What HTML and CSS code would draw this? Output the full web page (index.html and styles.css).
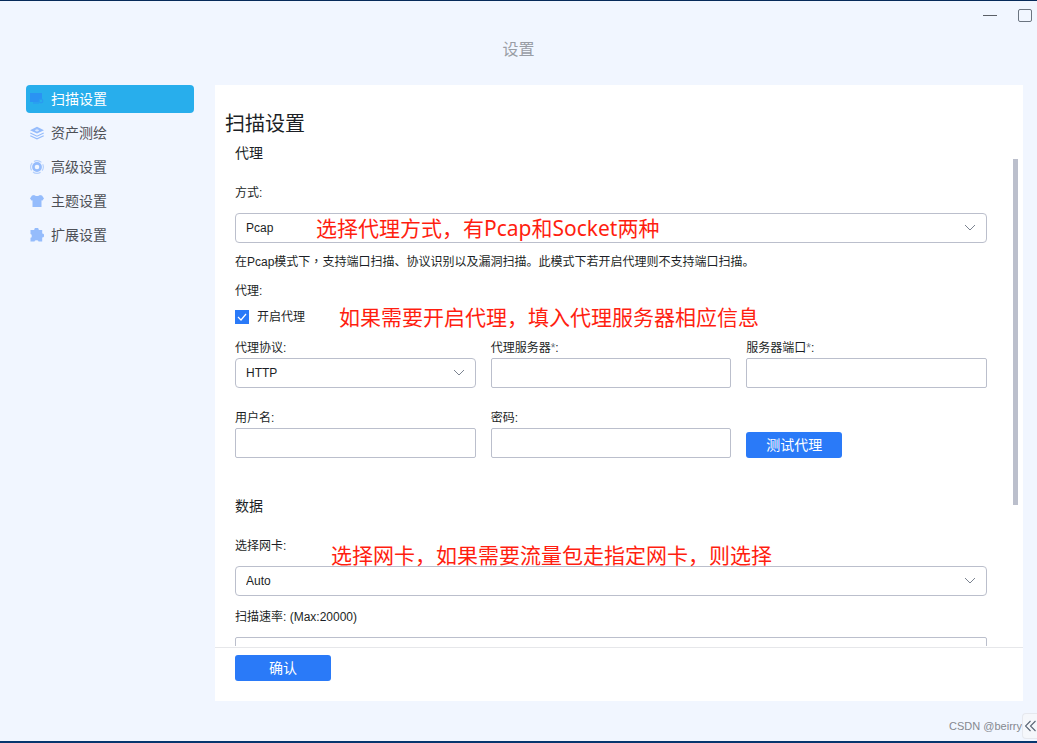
FILE: index.html
```html
<!DOCTYPE html>
<html lang="zh-CN">
<head>
<meta charset="utf-8">
<title>设置</title>
<link rel="stylesheet" href="styles.css">
</head>
<body>
<div class="window">
  <header class="titlebar">
    <h1 class="title">设置</h1>
    <div class="controls">
      <button class="control" type="button" aria-label="最小化"><svg width="16" height="16" viewBox="0 0 16 16"><path d="M1 8.500h14" stroke="#5b5f66" fill="none"/></svg></button>
      <button class="control" type="button" aria-label="最大化"><svg width="16" height="16" viewBox="0 0 16 16"><rect x="1.500" y="2.500" width="13" height="12" rx="1.500" stroke="#6b7480" fill="none"/></svg></button>
    </div>
  </header>

  <div class="body">
    <nav class="nav">
      <a class="nav-item active" href="#scan">
        <svg class="nav-icon" viewBox="0 0 14 14"><path d="M0 1h12v6l-2 .5-1.500 2.500H0z" fill="#2a93f3"/><path d="M3 11h6" stroke="#2a93f3"/><circle cx="11" cy="9" r="1.800" fill="none" stroke="#2a9cf0" stroke-width="1.300"/></svg>
        扫描设置</a>
      <a class="nav-item" href="#asset">
        <svg class="nav-icon" viewBox="0 0 14 14"><path d="M7 .8l7 3.400-7 3.400-7-3.400z" fill="#95bcfc"/><path d="M5 4.300h4M7 2.800v3" stroke="#f1f6ff" stroke-width=".8"/><path d="M.3 7L7 10.200 13.700 7M.3 9.700L7 12.900l6.700-3.200" fill="none" stroke="#95bcfc" stroke-width="1.200"/></svg>
        资产测绘</a>
      <a class="nav-item" href="#advanced">
        <svg class="nav-icon" viewBox="0 0 14 14"><circle cx="7" cy="7" r="6.400" fill="none" stroke="#b3cffc" stroke-width="1.100" stroke-dasharray="8 2.050" stroke-dashoffset="4"/><circle cx="7" cy="7" r="3.600" fill="none" stroke="#95bcfc" stroke-width="2.600"/></svg>
        高级设置</a>
      <a class="nav-item" href="#theme">
        <svg class="nav-icon" viewBox="0 0 14 14"><path d="M4.300 1c.7 1.300 4.700 1.300 5.400 0l2.300.4L14 4.500l-1.800 2.200-.7-.4V13h-9V6.300l-.7.4L0 4.500l2-3.100z" fill="#95bcfc"/></svg>
        主题设置</a>
      <a class="nav-item" href="#extension">
        <svg class="nav-icon" viewBox="0 0 14 14"><path d="M.5 2h3.700a2.200 2.200 0 0 1 4.600 0h3.400v3.500a2 2 0 0 1 0 4v4H8.500a2 1.300 0 0 0-4 0h-4V9.800a1.300 1.900 0 0 0 0-3.800z" fill="#95bcfc"/></svg>
        扩展设置</a>
    </nav>

    <main class="panel">
      <h2 class="panel-title">扫描设置</h2>
      <div class="scroll-area">
        <form class="form" id="settings">
          <h3 class="section-title">代理</h3>
          <div class="field">
            <label class="label" for="mode">方式:</label>
            <div class="select-box">
              <select class="input select" id="mode"><option>Pcap</option><option>Socket</option></select>
              <svg class="chevron" viewBox="0 0 12 8"><path d="M1 1l5 5 5-5" fill="none" stroke="#7b8390"/></svg>
              <p class="note note-mode">选择代理方式，有Pcap和Socket两种</p>
            </div>
          </div>
          <p class="help">在Pcap模式下<span class="mid-comma" lang="zh-TW">，</span>支持端口扫描、协议识别以及漏洞扫描。此模式下若开启代理则不支持端口扫描。</p>
          <div class="proxy">
            <p class="label">代理:</p>
            <div class="check-row">
              <span class="check-box">
                <input class="check" type="checkbox" id="enable" checked>
                <svg class="tick" viewBox="0 0 14 14"><path d="M3 7l3 3 5-6" fill="none" stroke="#fff" stroke-width="1.200"/></svg>
              </span>
              <label class="label" for="enable">开启代理</label>
              <p class="note note-proxy">如果需要开启代理，填入代理服务器相应信息</p>
            </div>
          </div>
          <div class="grid">
            <div class="cell">
              <label class="label" for="protocol">代理协议:</label>
              <div class="select-box">
                <select class="input select" id="protocol"><option>HTTP</option></select>
                <svg class="chevron" viewBox="0 0 12 8"><path d="M1 1l5 5 5-5" fill="none" stroke="#7b8390"/></svg>
              </div>
            </div>
            <div class="cell"><label class="label" for="server">代理服务器<span class="star">*</span>:</label><input class="input" id="server" type="text"></div>
            <div class="cell"><label class="label" for="port">服务器端口<span class="star">*</span>:</label><input class="input" id="port" type="text"></div>
            <div class="cell"><label class="label" for="user">用户名:</label><input class="input" id="user" type="text"></div>
            <div class="cell"><label class="label" for="password">密码:</label><input class="input" id="password" type="password"></div>
            <div class="cell cell-action"><button class="button" type="button">测试代理</button></div>
          </div>
          <h3 class="section-title section-data">数据</h3>
          <div class="field">
            <label class="label" for="nic">选择网卡:</label>
            <div class="select-box">
              <select class="input select" id="nic"><option>Auto</option></select>
              <svg class="chevron" viewBox="0 0 12 8"><path d="M1 1l5 5 5-5" fill="none" stroke="#7b8390"/></svg>
              <p class="note note-nic">选择网卡，如果需要流量包走指定网卡，则选择</p>
            </div>
          </div>
          <div class="field field-rate">
            <label class="label" for="rate">扫描速率: (Max:20000)</label>
            <input class="input" id="rate" type="text">
          </div>
        </form>
        <div class="rail"><div class="thumb"></div></div>
      </div>
      <div class="actions"><button class="button" type="submit" form="settings">确认</button></div>
    </main>
  </div>

  <footer class="bottom">
    <span class="credit">CSDN @beirry</span>
    <button class="collapse" type="button" aria-label="收起"><svg width="11" height="12" viewBox="0 0 11 12"><path d="M5.500 1l-5 5 5 5M10.500 1l-5 5 5 5" fill="none" stroke="#596474" stroke-width="1.100"/></svg></button>
  </footer>
</div>
</body>
</html>
```
FILE: styles.css
```css
* {
  box-sizing: border-box;
  margin: 0;
  padding: 0;
}

body {
  color: #1c1f26;
  font: 12px/16px "Liberation Sans", "Noto Sans CJK SC", sans-serif;
}

button,
input,
select {
  color: inherit;
  font: inherit;
}

.window {
  display: flex;
  flex-direction: column;
  height: 100vh;
  background: #f1f6ff;
  border-top: 1px solid #062a5a;
  border-bottom: 2px solid #06366e;
  overflow: hidden;
}

.titlebar {
  display: grid;
  grid-template-columns: 1fr auto 1fr;
  height: 84px;
  flex: none;
}

.title {
  grid-column: 2;
  padding-top: 39px;
  color: #999da5;
  font-size: 16px;
  font-weight: 400;
  line-height: 20px;
}

.controls {
  display: flex;
  justify-content: flex-end;
  align-items: flex-start;
  gap: 19px;
  padding: 6px 4px 0 0;
}

.control {
  display: flex;
  background: none;
  border: 0;
}

.body {
  display: flex;
  flex: 1;
  gap: 21px;
  min-height: 0;
  padding: 0 14px 0 26px;
}

.nav {
  display: flex;
  flex-direction: column;
  gap: 6px;
  width: 168px;
  flex: none;
}

.nav-item {
  display: flex;
  align-items: center;
  gap: 7px;
  height: 28px;
  padding-left: 4px;
  border-radius: 4px;
  color: #4d5056;
  font-size: 14px;
  text-decoration: none;
}

.nav-item.active {
  background: #28aeec;
  color: #fff;
}

.nav-icon {
  width: 14px;
  height: 14px;
}

.panel {
  display: flex;
  flex: 1;
  flex-direction: column;
  min-width: 0;
  background: #fff;
}

.panel-title {
  padding: 29px 10px 9px;
  font-size: 20px;
  font-weight: 400;
  line-height: 20px;
}

.scroll-area {
  display: flex;
  flex: 1;
  min-height: 0;
  margin-bottom: 1px;
}

.form {
  flex: 1;
  min-width: 0;
  padding: 0 26px 0 20px;
  overflow: auto;
  scrollbar-width: none;
}

.rail {
  width: 10px;
  padding: 16px 5px 0 0;
}

.thumb {
  height: 71%;
  background: #bbbfcc;
}

.section-title {
  margin-bottom: 22px;
  font-size: 14px;
  font-weight: 400;
  line-height: 20px;
}

.section-data {
  margin-top: 38px;
}

.field {
  display: flex;
  flex-direction: column;
  gap: 12px;
}

.field-rate {
  margin-top: 13px;
}

.input {
  display: block;
  width: 100%;
  height: 30px;
  padding: 0 10px;
  background: #fff;
  border: 1px solid #bbbfcc;
  border-radius: 2px;
}

.select-box {
  position: relative;
}

.select {
  border-radius: 4px;
  appearance: none;
}

.chevron {
  position: absolute;
  top: 11px;
  right: 11px;
  width: 12px;
  height: 8px;
  pointer-events: none;
}

.help {
  margin-top: 10px;
}

.mid-comma {
  font-family: "Noto Sans CJK TC", sans-serif;
}

.proxy {
  display: flex;
  flex-direction: column;
  gap: 10px;
  margin-top: 13px;
}

.check-row {
  position: relative;
  display: flex;
  align-items: center;
  gap: 8px;
}

.check-box {
  display: grid;
}

.check,
.tick {
  grid-area: 1 / 1;
  width: 14px;
  height: 14px;
  pointer-events: none;
}

.check {
  appearance: none;
  background: #fff;
  border: 1px solid #2a7af8;
  pointer-events: auto;
}

.check:checked {
  background: #2a7af8;
}

.grid {
  display: grid;
  grid-template-columns: repeat(3, 1fr);
  gap: 22px 15px;
  margin-top: 15px;
}

.cell {
  display: flex;
  flex-direction: column;
  gap: 2px;
}

.cell-action {
  align-items: flex-start;
  justify-content: flex-end;
}

.star {
  color: #6b7480;
}

.button {
  width: 96px;
  height: 26px;
  background: #2a7af8;
  border: 0;
  border-radius: 3px;
  color: #fff;
  font-size: 14px;
}

.actions {
  height: 54px;
  flex: none;
  padding: 7px 20px;
  border-top: 1px solid #e6e7ea;
}

.note {
  position: absolute;
  color: #ff1e10;
  font: 21px/24px "Noto Sans", "Noto Sans CJK SC", sans-serif;
  white-space: nowrap;
  pointer-events: none;
}

.note-mode {
  top: 3px;
  left: 81px;
}

.note-proxy {
  top: -4px;
  left: 104px;
}

.note-nic {
  top: -23px;
  left: 96px;
}

.bottom {
  display: flex;
  align-items: center;
  justify-content: flex-end;
  height: 40px;
  flex: none;
  padding-top: 10px;
}

.credit {
  color: #85888f;
  font-size: 11px;
}

.collapse {
  display: flex;
  align-items: center;
  justify-content: center;
  width: 15px;
  height: 26px;
  background: #f5f7fb;
  border: 1px solid #e6e8ee;
  border-right: 0;
  border-radius: 4px 0 0 4px;
}
```
